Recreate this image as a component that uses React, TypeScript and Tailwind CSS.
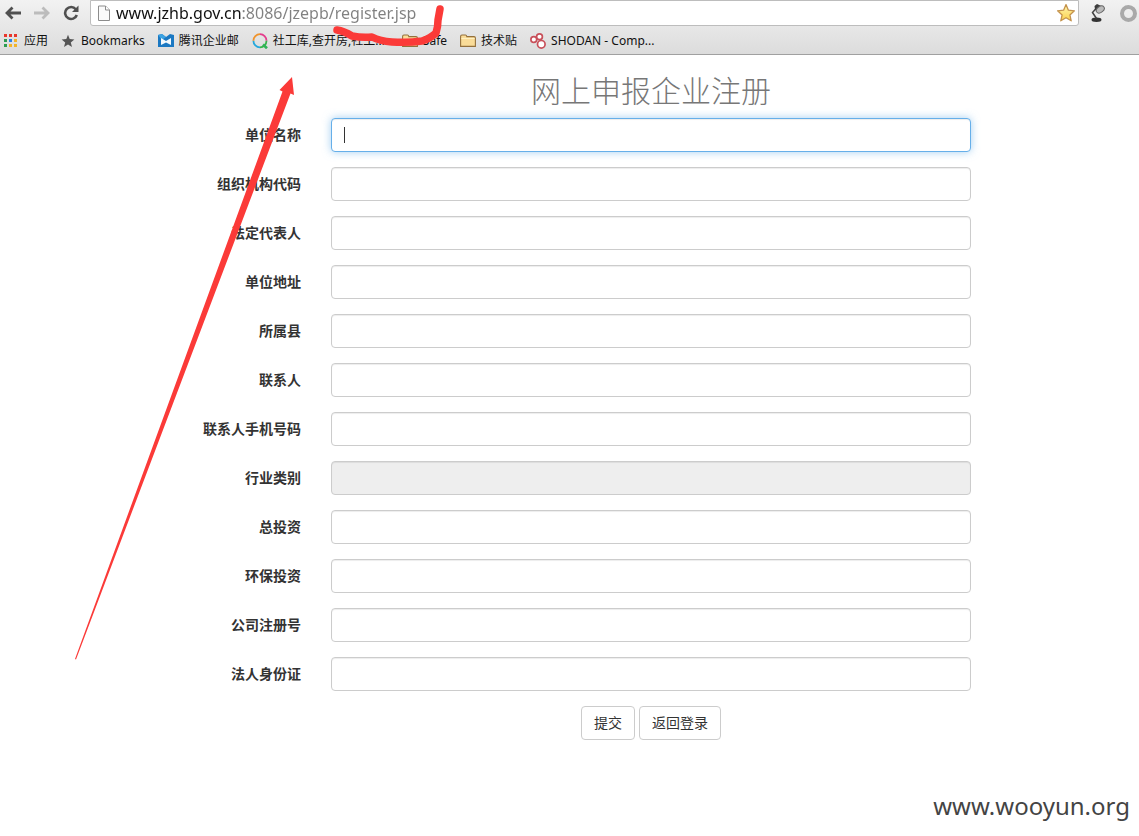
import React from "react";

const fields: { id: string; label: string; disabled?: boolean; active?: boolean }[] = [
  { id: "company", label: "单位名称", active: true },
  { id: "orgCode", label: "组织机构代码" },
  { id: "legalPerson", label: "法定代表人" },
  { id: "address", label: "单位地址" },
  { id: "county", label: "所属县" },
  { id: "contact", label: "联系人" },
  { id: "mobile", label: "联系人手机号码" },
  { id: "industry", label: "行业类别", disabled: true },
  { id: "investment", label: "总投资" },
  { id: "envInvestment", label: "环保投资" },
  { id: "regNumber", label: "公司注册号" },
  { id: "idCard", label: "法人身份证" },
];

function ArrowIcon({ flip, className }: { flip?: boolean; className: string }) {
  return (
    <svg viewBox="0 0 16 14" className={`h-[14px] w-4 ${className}`} aria-hidden="true">
      <path
        d={flip ? "M0 7H14M8.5 1.5L14 7L8.5 12.5" : "M16 7H2M7.5 1.5L2 7L7.5 12.5"}
        fill="none"
        stroke="currentColor"
        strokeWidth="2.8"
      />
    </svg>
  );
}

function ReloadIcon() {
  return (
    <svg viewBox="0 0 16 16" className="size-4 text-[#505050]" aria-hidden="true">
      <path d="M12.8 4.2A6 6 0 1 0 13.8 10" fill="none" stroke="currentColor" strokeWidth="2.6" />
      <path d="M15.5 0.5V7H9z" fill="currentColor" />
    </svg>
  );
}

function PageIcon() {
  return (
    <svg viewBox="0 0 12 16" className="h-4 w-3 shrink-0" aria-hidden="true">
      <path d="M.5 1H7.5L11.5 5V15.5H.5z" fill="#fafafa" stroke="#8c8c8c" />
      <path d="M7.5 1V5H11.5" fill="#fff" stroke="#8c8c8c" />
    </svg>
  );
}

function StarIcon() {
  return (
    <svg viewBox="0 0 20 20" className="size-5" aria-hidden="true">
      <defs>
        <linearGradient id="gold" x1="0" y1="0" x2="0" y2="1">
          <stop offset="0" stopColor="#fff6b0" />
          <stop offset="1" stopColor="#fbd04c" />
        </linearGradient>
      </defs>
      <path
        d="M10 1.6L12.4 7.2L18.4 7.8L13.9 11.9L15.2 17.8L10 14.7L4.8 17.8L6.1 11.9L1.6 7.8L7.6 7.2Z"
        fill="url(#gold)"
        stroke="#c4924c"
        strokeWidth="1.3"
        strokeLinejoin="round"
      />
    </svg>
  );
}

function LampIcon() {
  return (
    <svg viewBox="0 0 16 20" className="h-5 w-4" aria-hidden="true">
      <ellipse cx="6.5" cy="16.8" rx="5" ry="2.2" fill="#333" />
      <path d="M6.5 15.5L2.5 9.5L6.5 5" fill="none" stroke="#444" strokeWidth="1.5" />
      <path d="M4.5 3L7 1L12.5 3.5L8 9.5L5 6.5Z" fill="#3c3c3c" />
      <ellipse cx="10.3" cy="6.5" rx="4.4" ry="3" transform="rotate(-35 10.3 6.5)" fill="#bbb" stroke="#666" />
    </svg>
  );
}

function AppsIcon() {
  const colors = ["#e8372c", "#e8372c", "#e8372c", "#2c9c50", "#2c82e8", "#f2b42a", "#2c9c50", "#f2b42a", "#f2b42a"];
  return (
    <svg viewBox="0 0 13 13" className="size-[13px]" aria-hidden="true">
      {colors.map((c, i) => (
        <rect key={i} x={(i % 3) * 5} y={Math.floor(i / 3) * 5} width="3" height="3" fill={c} shapeRendering="crispEdges" />
      ))}
    </svg>
  );
}

function GreyStarIcon() {
  return (
    <svg viewBox="0 0 14 14" className="size-[14px]" aria-hidden="true">
      <path d="M7 .8L8.7 5.1L13.4 5.4L9.8 8.4L11 13L7 10.4L3 13L4.2 8.4L.6 5.4L5.3 5.1Z" fill="#555" />
    </svg>
  );
}

function MailIcon() {
  return (
    <svg viewBox="0 0 16 14" className="h-[14px] w-4" aria-hidden="true">
      <path d="M0 1L4 0L8 3L12 0L16 1V13H0z" fill="#1b78c2" />
      <path d="M0 1L4 0L8 3L4 6z" fill="#3ba2e2" />
      <path d="M3 4L8 7L13 4V11L8 8.5L3 11z" fill="#f3f9fd" />
    </svg>
  );
}

function RingIcon() {
  return (
    <svg viewBox="0 0 16 16" className="size-4" aria-hidden="true">
      <g fill="none" strokeWidth="1.8">
        <path d="M8 1.2A6.6 6.6 0 0 1 14.5 7.8" stroke="#e43c8c" />
        <path d="M14.500 7.8A6.600 6.600 0 0 1 8 14.400" stroke="#38b44a" />
        <path d="M8 14.400A6.600 6.600 0 0 1 1.400 7.800" stroke="#25a8dc" />
        <path d="M1.400 7.800A6.600 6.600 0 0 1 8 1.200" stroke="#f0932b" />
        <path d="M11 11.5L15 15.3" stroke="#2fb457" strokeWidth="2.6" />
      </g>
    </svg>
  );
}

function FolderIcon() {
  return (
    <svg viewBox="0 0 16 14" className="h-[14px] w-4" aria-hidden="true">
      <path d="M.6 12.4V2.4Q.6 1 2 1H5.5Q6.5 1 6.8 2.6H14Q15.4 2.6 15.4 4V12.4Z" fill="#fadc98" stroke="#94703c" strokeWidth="1.1" />
      <path d="M1.4 4.5H14.6" stroke="#fff0c0" />
    </svg>
  );
}

function ShodanIcon() {
  return (
    <svg viewBox="0 0 16 16" className="size-4" aria-hidden="true">
      <g fill="#fff" stroke="#c8505a" strokeWidth="1.7">
        <circle cx="3.8" cy="6.5" r="2.9" />
        <circle cx="9.5" cy="3.8" r="2.9" />
        <circle cx="11.3" cy="11.3" r="3.8" />
      </g>
    </svg>
  );
}

const bookmarks: { label: string; icon: React.ReactNode; gap: string; width?: string }[] = [
  { label: "应用", icon: <AppsIcon />, gap: "gap-[7px]" },
  { label: "Bookmarks", icon: <GreyStarIcon />, gap: "gap-[6px]" },
  { label: "腾讯企业邮", icon: <MailIcon />, gap: "gap-[5px]" },
  { label: "社工库,查开房,社工...", icon: <RingIcon />, gap: "gap-[5px]", width: "w-[116px]" },
  { label: "Safe", icon: <FolderIcon />, gap: "gap-[5px]" },
  { label: "技术贴", icon: <FolderIcon />, gap: "gap-[5px]" },
  { label: "SHODAN - Comp...", icon: <ShodanIcon />, gap: "gap-[5px]" },
];

function BrowserBar() {
  return (
    <header className="border-b border-[#a0a0a0] bg-linear-to-b from-[#f2f2f2] to-[#dcdcdc] font-['Noto_Sans','Noto_Sans_CJK_SC',sans-serif]">
      <div className="flex h-[26px] items-center">
        <nav className="flex w-[90px] shrink-0 items-center gap-[13px] pl-[5px]">
          <button type="button" aria-label="后退"><ArrowIcon className="text-[#505050]" /></button>
          <button type="button" aria-label="前进"><ArrowIcon flip className="text-[#bcbcbc]" /></button>
          <button type="button" aria-label="刷新"><ReloadIcon /></button>
        </nav>
        <div className="flex h-full min-w-0 flex-1 items-center gap-[6px] rounded-b-[3px] border border-[#bdbdbd] bg-white pr-[2px] pl-[7px]">
          <PageIcon />
          <input
            aria-label="网址"
            defaultValue="www.jzhb.gov.cn:8086/jzepb/register.jsp"
            className="h-[22px] min-w-0 flex-1 bg-[linear-gradient(to_right,#111_126px,#808080_126px)] bg-clip-text text-base text-transparent outline-none"
          />
          <button type="button" aria-label="收藏"><StarIcon /></button>
        </div>
        <div className="flex w-[60px] shrink-0 items-center gap-[14px] overflow-hidden pl-[11px]">
          <button type="button" aria-label="台灯"><LampIcon /></button>
          <button type="button" aria-label="扩展" className="size-[17px] shrink-0 rounded-full border-4 border-[#a9a9a9]" />
        </div>
      </div>
      <nav className="flex h-7 items-center gap-[13px] pt-px pl-1 text-xs whitespace-nowrap text-[#111]">
        {bookmarks.map((b) => (
          <a key={b.label} href="#" className={`flex items-center ${b.gap}`}>
            {b.icon}
            <span className={b.width}>{b.label}</span>
          </a>
        ))}
      </nav>
    </header>
  );
}

function Annotations() {
  return (
    <svg className="pointer-events-none absolute top-0 left-0 h-[670px] w-[460px]" viewBox="0 0 460 670" aria-hidden="true">
      <path d="M292 77L294 95L290.5 93.5L76 659.5L75 659L282.5 91.5L279.5 90Z" fill="#fb3a38" />
      <path
        d="M337 30Q344 31 352 36Q362 38 372 37Q380 41 392 42Q408 43 422 41Q431 38 436 33Q438 27 438 20L440 9"
        fill="none"
        stroke="#fb3a38"
        strokeWidth="7.5"
        strokeLinecap="round"
        strokeLinejoin="round"
      />
    </svg>
  );
}

export default function App() {
  return (
    <div className="relative flex min-h-screen flex-col bg-white font-['Liberation_Sans','Noto_Sans_CJK_SC',sans-serif] text-sm text-[#333]">
      <BrowserBar />
      <main className="mx-auto w-full max-w-[833px] flex-1 px-[15px] pt-[17px]">
        <form onSubmit={(e) => e.preventDefault()} className="grid grid-cols-[133px_1fr] items-center gap-x-[30px] gap-y-[15px]">
          <h1 className="col-start-2 -mb-[9px] text-center text-[30px] leading-10 font-light text-[#777]">网上申报企业注册</h1>
          {fields.map((f) => (
            <React.Fragment key={f.id}>
              <label htmlFor={f.id} className="text-right text-sm font-bold whitespace-nowrap">{f.label}</label>
              <div className="relative">
                <input
                  id={f.id}
                  name={f.id}
                  disabled={f.disabled}
                  className={`block h-[34px] w-full rounded border px-3 outline-none ${
                    f.active
                      ? "border-[#66afe9] caret-transparent shadow-[inset_0_1px_1px_rgba(0,0,0,0.075),0_0_8px_rgba(102,175,233,0.6)]"
                      : "border-[#ccc] shadow-[inset_0_1px_1px_rgba(0,0,0,0.075)]"
                  } ${f.disabled ? "bg-[#eee]" : "bg-white"}`}
                />
                {f.active && <span className="absolute top-[9px] left-[13px] h-4 w-px bg-[#333]" />}
              </div>
            </React.Fragment>
          ))}
          <div className="col-start-2 flex justify-center gap-1">
            <button type="submit" className="h-[34px] rounded border border-[#ccc] bg-white px-3">提交</button>
            <button type="button" className="h-[34px] rounded border border-[#ccc] bg-white px-3">返回登录</button>
          </div>
        </form>
      </main>
      <footer className="pr-[9px] pb-[14px] text-right font-['Noto_Sans',sans-serif] text-2xl text-[#444]">www.wooyun.org</footer>
      <Annotations />
    </div>
  );
}
